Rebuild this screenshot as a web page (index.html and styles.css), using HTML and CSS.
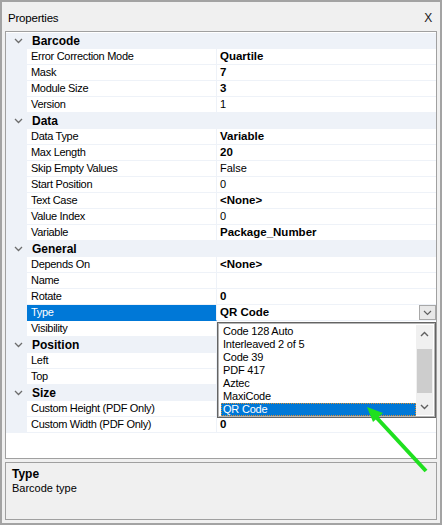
FILE: index.html
```html
<!DOCTYPE html>
<html lang="en">
<head>
    <meta charset="UTF-8">
    <title>Properties</title>
    <link rel="stylesheet" href="styles.css">
</head>
<body>
    <div class="window">
        <div class="titlebar">
            <span>Properties</span>
            <span class="close">X</span>
        </div>

        <div class="grid">
            <div class="cat"><span class="chev"><svg width="9" height="6" viewBox="0 0 9 6"><path d="M1 1 L4.5 4.5 L8 1" fill="none" stroke="#6d6d6d" stroke-width="1.3"/></svg></span>Barcode</div>
            <div class="prop"><span class="name">Error Correction Mode</span><span class="val b">Quartile</span></div>
            <div class="prop"><span class="name">Mask</span><span class="val b">7</span></div>
            <div class="prop"><span class="name">Module Size</span><span class="val b">3</span></div>
            <div class="prop"><span class="name">Version</span><span class="val">1</span></div>

            <div class="cat"><span class="chev"><svg width="9" height="6" viewBox="0 0 9 6"><path d="M1 1 L4.5 4.5 L8 1" fill="none" stroke="#6d6d6d" stroke-width="1.3"/></svg></span>Data</div>
            <div class="prop"><span class="name">Data Type</span><span class="val b">Variable</span></div>
            <div class="prop"><span class="name">Max Length</span><span class="val b">20</span></div>
            <div class="prop"><span class="name">Skip Empty Values</span><span class="val">False</span></div>
            <div class="prop"><span class="name">Start Position</span><span class="val">0</span></div>
            <div class="prop"><span class="name">Text Case</span><span class="val b">&lt;None&gt;</span></div>
            <div class="prop"><span class="name">Value Index</span><span class="val">0</span></div>
            <div class="prop"><span class="name">Variable</span><span class="val b">Package_Number</span></div>

            <div class="cat"><span class="chev"><svg width="9" height="6" viewBox="0 0 9 6"><path d="M1 1 L4.5 4.5 L8 1" fill="none" stroke="#6d6d6d" stroke-width="1.3"/></svg></span>General</div>
            <div class="prop"><span class="name">Depends On</span><span class="val b">&lt;None&gt;</span></div>
            <div class="prop"><span class="name">Name</span><span class="val"></span></div>
            <div class="prop"><span class="name">Rotate</span><span class="val b">0</span></div>
            <div class="prop selected">
                <span class="name">Type</span>
                <span class="val b">QR Code
                    <span class="drop-btn"><svg width="9" height="6" viewBox="0 0 9 6"><path d="M1 1 L4.5 4.5 L8 1" fill="none" stroke="#606060" stroke-width="1.2"/></svg></span>
                </span>
            </div>
            <div class="prop"><span class="name">Visibility</span><span class="val"></span></div>

            <div class="cat"><span class="chev"><svg width="9" height="6" viewBox="0 0 9 6"><path d="M1 1 L4.5 4.5 L8 1" fill="none" stroke="#6d6d6d" stroke-width="1.3"/></svg></span>Position</div>
            <div class="prop"><span class="name">Left</span><span class="val"></span></div>
            <div class="prop"><span class="name">Top</span><span class="val"></span></div>

            <div class="cat"><span class="chev"><svg width="9" height="6" viewBox="0 0 9 6"><path d="M1 1 L4.5 4.5 L8 1" fill="none" stroke="#6d6d6d" stroke-width="1.3"/></svg></span>Size</div>
            <div class="prop"><span class="name">Custom Height (PDF Only)</span><span class="val"></span></div>
            <div class="prop"><span class="name">Custom Width (PDF Only)</span><span class="val b">0</span></div>

            <!-- open list of the Type editor -->
            <div class="dropdown">
                <div class="items">
                    <div class="item">Code 128 Auto</div>
                    <div class="item">Interleaved 2 of 5</div>
                    <div class="item">Code 39</div>
                    <div class="item">PDF 417</div>
                    <div class="item">Aztec</div>
                    <div class="item">MaxiCode</div>
                    <div class="item active">QR Code</div>
                </div>
                <div class="scrollbar">
                    <span class="sb-arrow"><svg width="9" height="6" viewBox="0 0 9 6"><path d="M1 5 L4.5 1.5 L8 5" fill="none" stroke="#606060" stroke-width="1.4"/></svg></span>
                    <span class="sb-track"><span class="sb-thumb"></span></span>
                    <span class="sb-arrow"><svg width="9" height="6" viewBox="0 0 9 6"><path d="M1 1 L4.5 4.5 L8 1" fill="none" stroke="#606060" stroke-width="1.4"/></svg></span>
                </div>
            </div>
        </div>

        <div class="desc">
            <div class="desc-title">Type</div>
            <div>Barcode type</div>
        </div>

        <svg class="pointer" width="442" height="525" viewBox="0 0 442 525">
            <line x1="426" y1="471" x2="376" y2="417" stroke="#1fe01f" stroke-width="4"/>
            <polygon points="367,407 383,413 373,422" fill="#1fe01f"/>
        </svg>
    </div>
</body>
</html>
```

FILE: styles.css
```css
* {
    box-sizing: border-box;
}

body {
    margin: 0;
    background: #f0f0f0;
    font-family: 'Liberation Sans', Arial, sans-serif;
    font-size: 11px;
    color: #000;
}

.window {
    position: relative;
    width: 442px;
    height: 525px;
    border: 2px solid #a3a3a3;
    background: #f0f0f0;
    display: flex;
    flex-direction: column;
    padding: 0 3px 2px 3px;
}

.titlebar {
    height: 29px;
    display: flex;
    justify-content: space-between;
    align-items: center;
    padding: 2px 5px 0 3px;
    font-size: 11.5px;
    letter-spacing: -0.2px;
}

.close {
    font-size: 12px;
    color: #1a1a1a;
}

.grid {
    position: relative;
    height: 428px;
    background: #fff;
    border: 1px solid #a0a0a0;
    padding-top: 1px;
}

.cat {
    height: 16px;
    display: flex;
    align-items: center;
    background: #eef2f8;
    font-weight: bold;
    font-size: 12px;
}

.chev {
    width: 26px;
    display: flex;
    justify-content: center;
    padding-right: 2px;
}

.prop {
    height: 16px;
    display: flex;
    background: #eef2f8;
    padding-left: 21px;
}

.name,
.val {
    height: 16px;
    line-height: 15px;
    background: #fff;
    border-bottom: 1px solid #eef2f8;
    white-space: nowrap;
}

.name {
    width: 190px;
    padding-left: 4px;
    border-right: 1px solid #eef2f8;
    letter-spacing: -0.3px;
}

.val {
    flex: 1;
    padding-left: 3px;
    position: relative;
}

.b {
    font-weight: bold;
    font-size: 11.5px;
}

.selected .name {
    background: #0078d7;
    color: #fff;
    border-bottom-color: #0078d7;
}

.drop-btn {
    position: absolute;
    right: 0;
    top: 0;
    width: 17px;
    height: 15px;
    background: #e8e8e8;
    border: 1px solid #a8a8a8;
    display: flex;
    align-items: center;
    justify-content: center;
}

.dropdown {
    position: absolute;
    left: 211px;
    top: 290px;
    width: 219px;
    height: 96px;
    background: #fff;
    border: 1px solid #646464;
    box-shadow: inset 0 0 0 1px #b4b4b4;
    display: flex;
    padding: 2px 2px 2px 2px;
}

.items {
    flex: 1;
    padding-left: 1px;
}

.item {
    height: 13px;
    line-height: 13px;
    padding-left: 2px;
    letter-spacing: -0.2px;
}

.item.active {
    background: #0078d7;
    color: #fff;
    outline: 1px dotted #e09030;
    outline-offset: -1px;
}

.scrollbar {
    width: 17px;
    background: #f0f0f0;
    display: flex;
    flex-direction: column;
}

.sb-arrow {
    height: 17px;
    display: flex;
    align-items: center;
    justify-content: center;
}

.sb-track {
    flex: 1;
    padding: 7px 1px 0 1px;
}

.sb-thumb {
    display: block;
    height: 44px;
    background: #cdcdcd;
}

.desc {
    margin-top: 3px;
    height: 58px;
    border: 1px solid #a0a0a0;
    padding: 4px 6px;
}

.desc-title {
    font-weight: bold;
    font-size: 12px;
    margin-bottom: 1px;
}

.pointer {
    position: absolute;
    left: -2px;
    top: -2px;
    pointer-events: none;
}
```
